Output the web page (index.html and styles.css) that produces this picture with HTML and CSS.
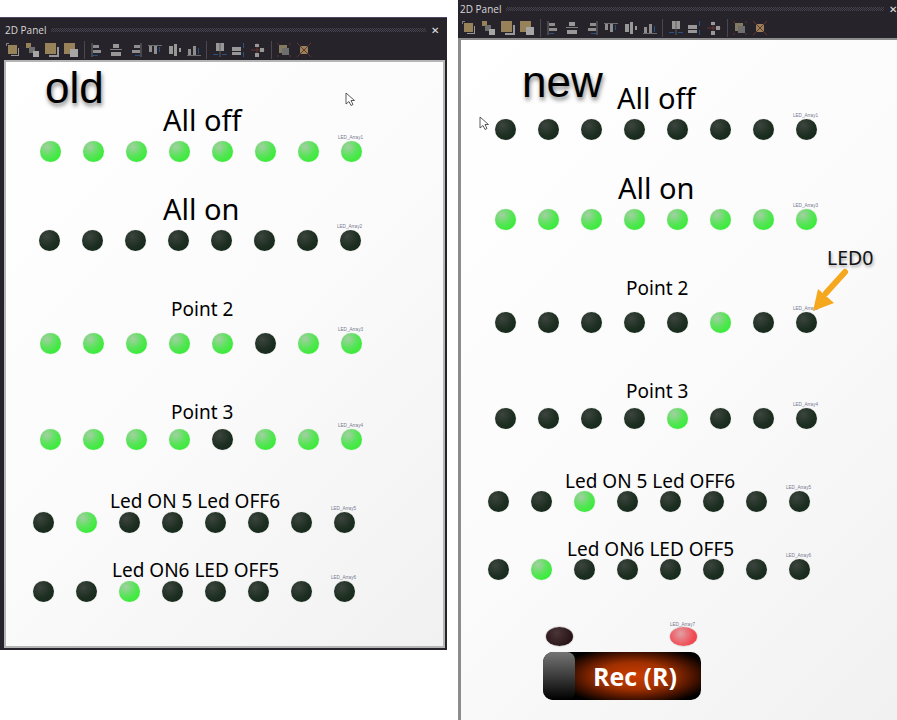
FILE: index.html
```html
<!DOCTYPE html>
<html lang="en">
<head>
    <meta charset="UTF-8">
    <meta name="viewport" content="width=device-width, initial-scale=1.0">
    <title>2D Panel old and new</title>
    <link rel="stylesheet" href="styles.css">
</head>
<body>
  <!-- Toolbar icon shapes, used by both panels -->
  <svg class="sprite" width="0" height="0" aria-hidden="true">
    <symbol id="i1" viewBox="0 0 16 16"><path d="M1 1h3v1H2v2H1z" fill="#8b8b8b"/><rect x="3" y="3" width="9" height="9" fill="#a48d5f"/><path d="M13 6h1v8H6v-1h7z" fill="#a5a5a5"/></symbol>
    <symbol id="i2" viewBox="0 0 16 16"><rect x="2" y="1" width="5" height="5" fill="#a48d5f"/><rect x="5" y="5" width="6" height="6" fill="#777"/><rect x="9" y="9" width="6" height="6" fill="#b5b5b5"/></symbol>
    <symbol id="i3" viewBox="0 0 16 16"><rect x="1" y="1" width="11" height="11" fill="#a48d5f"/><path d="M13 5h2v10H5v-2h8z" fill="#a5a5a5"/></symbol>
    <symbol id="i4" viewBox="0 0 16 16"><rect x="1" y="1" width="11" height="11" fill="#a48d5f"/><rect x="7" y="7" width="8" height="8" fill="#b5b5b5"/></symbol>
    <symbol id="a1" viewBox="0 0 16 16"><path d="M3 1v14" stroke="#777"/><rect x="4" y="3" width="6" height="3" fill="#9a9a9a"/><rect x="4" y="8" width="8" height="3" fill="#9a9a9a"/><path d="M4 13h5v1H4z" fill="#27598f"/></symbol>
    <symbol id="a2" viewBox="0 0 16 16"><rect x="5" y="2" width="6" height="4" fill="#a5a5a5"/><rect x="2" y="7" width="12" height="1" fill="#888"/><rect x="3" y="10" width="10" height="4" fill="#a5a5a5"/></symbol>
    <symbol id="a3" viewBox="0 0 16 16"><path d="M13 1v14" stroke="#777"/><rect x="6" y="3" width="6" height="3" fill="#9a9a9a"/><rect x="4" y="8" width="8" height="3" fill="#9a9a9a"/><path d="M7 13h5v1H7z" fill="#27598f"/></symbol>
    <symbol id="a4" viewBox="0 0 16 16"><path d="M1 3h14v1H1z" fill="#777"/><rect x="2" y="4" width="3" height="6" fill="#9a9a9a"/><rect x="7" y="4" width="3" height="8" fill="#9a9a9a"/><path d="M12 5h1v5h-1z" fill="#27598f"/></symbol>
    <symbol id="a5" viewBox="0 0 16 16"><rect x="2" y="4" width="4" height="8" fill="#a5a5a5"/><rect x="7" y="2" width="3" height="12" fill="#a5a5a5"/><rect x="12" y="6" width="2" height="4" fill="#a5a5a5"/></symbol>
    <symbol id="a6" viewBox="0 0 16 16"><path d="M1 13h14v1H1z" fill="#777"/><rect x="2" y="7" width="3" height="6" fill="#9a9a9a"/><rect x="7" y="4" width="3" height="9" fill="#9a9a9a"/><path d="M12 6h1v6h-1z" fill="#27598f"/></symbol>
    <symbol id="d1" viewBox="0 0 16 16"><rect x="4" y="1" width="8" height="8" fill="#a5a5a5"/><path d="M1 12.500h5M10 12.500h5" stroke="#27598f"/><path d="M8 1v14" stroke="#666"/></symbol>
    <symbol id="d2" viewBox="0 0 16 16"><rect x="1" y="5" width="9" height="4" fill="#a5a5a5"/><rect x="1" y="10" width="9" height="3" fill="#a5a5a5"/><path d="M12.500 1v5M12.500 10v5" stroke="#27598f"/></symbol>
    <symbol id="d3" viewBox="0 0 16 16"><path d="M1 8h14M7 1v14" stroke="#70352f"/><rect x="5" y="2" width="4" height="3" fill="#a5a5a5"/><rect x="5" y="11" width="4" height="4" fill="#a5a5a5"/><rect x="10" y="6" width="4" height="4" fill="#a5a5a5"/></symbol>
    <symbol id="g1" viewBox="0 0 16 16"><rect x="3" y="3" width="8" height="8" fill="#8f8468"/><rect x="6" y="6" width="7" height="7" fill="#777"/><path d="M1 2h2M13 2h2M1 14h2M13 14h2" stroke="#70352f"/></symbol>
    <symbol id="g2" viewBox="0 0 16 16"><rect x="4" y="4" width="8" height="8" fill="#a48d5f"/><path d="M1 1l14 14M15 1L1 15" stroke="#70352f"/></symbol>
  </svg>

  <!-- Old panel -->
  <section class="window window-old">
    <header class="titlebar">
      <span class="title">2D Panel</span>
      <span class="grip"></span>
      <span class="close">✕</span>
    </header>
    <div class="toolbar">
      <svg class="tool"><use href="#i1"/></svg><svg class="tool"><use href="#i2"/></svg><svg class="tool"><use href="#i3"/></svg><svg class="tool"><use href="#i4"/></svg>
      <span class="sep"></span>
      <svg class="tool"><use href="#a1"/></svg><svg class="tool"><use href="#a2"/></svg><svg class="tool"><use href="#a3"/></svg><svg class="tool"><use href="#a4"/></svg><svg class="tool"><use href="#a5"/></svg><svg class="tool"><use href="#a6"/></svg>
      <span class="sep"></span>
      <svg class="tool"><use href="#d1"/></svg><svg class="tool"><use href="#d2"/></svg><svg class="tool"><use href="#d3"/></svg>
      <span class="sep"></span>
      <svg class="tool"><use href="#g1"/></svg><svg class="tool"><use href="#g2"/></svg>
    </div>
    <div class="canvas">
      <div class="note old-note">old</div>
      <svg class="cursor old-cursor" viewBox="0 0 10 15"><path d="M1 1v11l3-2.500 2 4 2-1-2-4h3.500z" fill="#fff" stroke="#333" stroke-width="0.800"/></svg>

      <div class="heading big old-t1">All off</div>
      <div class="leds old-r1">
        <span class="led on"></span><span class="led on"></span><span class="led on"></span><span class="led on"></span><span class="led on"></span><span class="led on"></span><span class="led on"></span>
        <span class="led on"><span class="tag">LED_Array1</span></span>
      </div>

      <div class="heading big old-t2">All on</div>
      <div class="leds old-r2">
        <span class="led"></span><span class="led"></span><span class="led"></span><span class="led"></span><span class="led"></span><span class="led"></span><span class="led"></span>
        <span class="led"><span class="tag">LED_Array2</span></span>
      </div>

      <div class="heading old-t3">Point 2</div>
      <div class="leds old-r3">
        <span class="led on"></span><span class="led on"></span><span class="led on"></span><span class="led on"></span><span class="led on"></span><span class="led"></span><span class="led on"></span>
        <span class="led on"><span class="tag">LED_Array3</span></span>
      </div>

      <div class="heading old-t4">Point 3</div>
      <div class="leds old-r4">
        <span class="led on"></span><span class="led on"></span><span class="led on"></span><span class="led on"></span><span class="led"></span><span class="led on"></span><span class="led on"></span>
        <span class="led on"><span class="tag">LED_Array4</span></span>
      </div>

      <div class="heading old-t5">Led ON 5 Led OFF6</div>
      <div class="leds old-r5">
        <span class="led"></span><span class="led on"></span><span class="led"></span><span class="led"></span><span class="led"></span><span class="led"></span><span class="led"></span>
        <span class="led"><span class="tag">LED_Array5</span></span>
      </div>

      <div class="heading old-t6">Led ON6 LED OFF5</div>
      <div class="leds old-r6">
        <span class="led"></span><span class="led"></span><span class="led on"></span><span class="led"></span><span class="led"></span><span class="led"></span><span class="led"></span>
        <span class="led"><span class="tag">LED_Array6</span></span>
      </div>
    </div>
  </section>

  <!-- New panel -->
  <section class="window window-new">
    <header class="titlebar">
      <span class="title">2D Panel</span>
      <span class="grip"></span>
      <span class="close">✕</span>
    </header>
    <div class="toolbar">
      <svg class="tool"><use href="#i1"/></svg><svg class="tool"><use href="#i2"/></svg><svg class="tool"><use href="#i3"/></svg><svg class="tool"><use href="#i4"/></svg>
      <span class="sep"></span>
      <svg class="tool"><use href="#a1"/></svg><svg class="tool"><use href="#a2"/></svg><svg class="tool"><use href="#a3"/></svg><svg class="tool"><use href="#a4"/></svg><svg class="tool"><use href="#a5"/></svg><svg class="tool"><use href="#a6"/></svg>
      <span class="sep"></span>
      <svg class="tool"><use href="#d1"/></svg><svg class="tool"><use href="#d2"/></svg><svg class="tool"><use href="#d3"/></svg>
      <span class="sep"></span>
      <svg class="tool"><use href="#g1"/></svg><svg class="tool"><use href="#g2"/></svg>
    </div>
    <div class="canvas">
      <div class="note new-note">new</div>
      <svg class="cursor new-cursor" viewBox="0 0 10 15"><path d="M1 1v11l3-2.500 2 4 2-1-2-4h3.500z" fill="#fff" stroke="#333" stroke-width="0.800"/></svg>

      <div class="heading big new-t1">All off</div>
      <div class="leds new-r1">
        <span class="led"></span><span class="led"></span><span class="led"></span><span class="led"></span><span class="led"></span><span class="led"></span><span class="led"></span>
        <span class="led"><span class="tag">LED_Array1</span></span>
      </div>

      <div class="heading big new-t2">All on</div>
      <div class="leds new-r2">
        <span class="led on"></span><span class="led on"></span><span class="led on"></span><span class="led on"></span><span class="led on"></span><span class="led on"></span><span class="led on"></span>
        <span class="led on"><span class="tag">LED_Array3</span></span>
      </div>

      <div class="heading new-t3">Point 2</div>
      <div class="leds new-r3">
        <span class="led"></span><span class="led"></span><span class="led"></span><span class="led"></span><span class="led"></span><span class="led on"></span><span class="led"></span>
        <span class="led"><span class="tag">LED_Array2</span></span>
      </div>

      <div class="callout">LED0</div>
      <svg class="arrow" viewBox="0 0 40 44"><path d="M33 4L14 25" stroke="#f5a81e" stroke-width="6" stroke-linecap="round"/><path d="M1 43l5-22 16 14z" fill="#f5a81e"/></svg>

      <div class="heading new-t4">Point 3</div>
      <div class="leds new-r4">
        <span class="led"></span><span class="led"></span><span class="led"></span><span class="led"></span><span class="led on"></span><span class="led"></span><span class="led"></span>
        <span class="led"><span class="tag">LED_Array4</span></span>
      </div>

      <div class="heading new-t5">Led ON 5 Led OFF6</div>
      <div class="leds new-r5">
        <span class="led"></span><span class="led"></span><span class="led on"></span><span class="led"></span><span class="led"></span><span class="led"></span><span class="led"></span>
        <span class="led"><span class="tag">LED_Array5</span></span>
      </div>

      <div class="heading new-t6">Led ON6 LED OFF5</div>
      <div class="leds new-r6">
        <span class="led"></span><span class="led on"></span><span class="led"></span><span class="led"></span><span class="led"></span><span class="led"></span><span class="led"></span>
        <span class="led"><span class="tag">LED_Array6</span></span>
      </div>

      <span class="lamp lamp-off"></span>
      <span class="lamp lamp-on"><span class="tag">LED_Array7</span></span>
      <div class="rec">
        <span class="rec-knob"></span>
        <span class="rec-text">Rec (R)</span>
      </div>
    </div>
  </section>
</body>
</html>
```

FILE: styles.css
```css
/* Global Styles */
body {
    margin: 0;
    width: 897px;
    height: 720px;
    overflow: hidden;
    background: #fff;
    display: flex;
    align-items: flex-start;
    gap: 11px;
    font-family: "Noto Sans", "Open Sans", sans-serif;
}

.sprite {
    position: absolute;
}

/* Windows */
.window {
    box-sizing: border-box;
    display: flex;
    flex-direction: column;
    background: #27232a;
}

.window-old {
    width: 447px;
    height: 633px;
    margin-top: 17px;
    padding: 0 2px 2px 4px;
    border-top: 1px solid #4d4763;
}

.window-new {
    width: 439px;
    height: 720px;
}

.titlebar {
    box-sizing: border-box;
    display: flex;
    align-items: center;
    gap: 5px;
    height: 22px;
    flex: none;
    color: #d8d8d8;
    font-size: 10px;
}

.window-old .titlebar {
    padding: 2px 6px 0 1px;
}

.window-new .titlebar {
    height: 18px;
    padding-left: 2px;
}

.title {
    font-family: "Open Sans", sans-serif;
    white-space: nowrap;
}

.grip {
    flex: 1;
    height: 4px;
    background-image: repeating-conic-gradient(#46424e 0 25%, transparent 0 50%);
    background-size: 2px 2px;
}

.close {
    font-size: 10px;
    color: #e4e4e4;
}

/* Toolbar */
.toolbar {
    display: flex;
    align-items: center;
    height: 20px;
    flex: none;
    gap: 3.4px;
    padding-left: 1px;
}

.window-new .toolbar {
    padding-left: 3px;
}

.tool {
    width: 16px;
    height: 16px;
    flex: none;
    opacity: 0.9;
}

.sep {
    width: 1px;
    height: 18px;
    margin: 0 1px;
    background: #4b4750;
}

/* Canvas */
.canvas {
    position: relative;
    box-sizing: border-box;
    flex: 1;
    background: linear-gradient(135deg, #fff 0%, #fbfbfb 50%, #f1f1f1 100%);
    border: 2px solid #b5b5b5;
}

.window-new .canvas {
    border-width: 2px 0 0 3px;
    border-color: #8c8c8c;
}

.note {
    position: absolute;
    font-family: "Liberation Sans", sans-serif;
    font-size: 44px;
    line-height: 50px;
    color: #000;
    text-shadow: 1px 3px 4px rgba(0, 0, 0, 0.5);
}

.heading {
    position: absolute;
    font-size: 19px;
    line-height: 26px;
    color: #000;
    white-space: nowrap;
    font-family: "Noto Sans", sans-serif;
}

.big {
    font-size: 29px;
    line-height: 36px;
}

.cursor {
    position: absolute;
    width: 10px;
    height: 15px;
}

/* LEDs */
.leds {
    position: absolute;
    display: flex;
    gap: 22px;
}

.led {
    position: relative;
    flex: none;
    width: 21px;
    height: 21px;
    border-radius: 50%;
    background: radial-gradient(circle at 35% 30%, #3c443e 0%, #1c2e20 55%, #10261a 100%);
    box-shadow: 0 0 1px #a8b0a8;
}

.led.on {
    background: radial-gradient(circle at 33% 28%, #a4cfa4 0%, #58e458 45%, #1ff41f 100%);
    box-shadow: 0 0 1px #b4c4b4;
}

.tag {
    position: absolute;
    left: -3px;
    bottom: 21px;
    font-family: "Liberation Sans", sans-serif;
    font-size: 4.6px;
    line-height: 7px;
    color: #777a90;
    white-space: nowrap;
}

/* Old panel positions */
.old-note { left: 39px; top: 1px; }
.old-cursor { left: 339px; top: 30px; }
.old-t1 { left: 157px; top: 40px; }
.old-t2 { left: 157px; top: 129px; }
.old-t3 { left: 165px; top: 234px; }
.old-t4 { left: 165px; top: 337px; }
.old-t5 { left: 104px; top: 426px; }
.old-t6 { left: 106px; top: 495px; }
.old-r1 { left: 34px; top: 79px; }
.old-r2 { left: 33px; top: 168px; }
.old-r3 { left: 34px; top: 271px; }
.old-r4 { left: 34px; top: 367px; }
.old-r5 { left: 27px; top: 450px; }
.old-r6 { left: 27px; top: 519px; }

/* New panel positions */
.new-note { left: 61px; top: 17px; }
.new-cursor { left: 18px; top: 76px; }
.new-t1 { left: 156px; top: 40px; }
.new-t2 { left: 157px; top: 130px; }
.new-t3 { left: 165px; top: 235px; }
.new-t4 { left: 165px; top: 338px; }
.new-t5 { left: 104px; top: 428px; }
.new-t6 { left: 106px; top: 496px; }
.new-r1 { left: 34px; top: 79px; }
.new-r2 { left: 34px; top: 169px; }
.new-r3 { left: 34px; top: 272px; }
.new-r4 { left: 34px; top: 368px; }
.new-r5 { left: 27px; top: 451px; }
.new-r6 { left: 27px; top: 519px; }

.callout {
    position: absolute;
    left: 366px;
    top: 204px;
    font-size: 19.5px;
    line-height: 28px;
    color: #111;
    text-shadow: 1px 2px 3px rgba(0, 0, 0, 0.35);
}

.arrow {
    position: absolute;
    left: 351px;
    top: 228px;
    width: 40px;
    height: 44px;
}

/* Record control */
.lamp {
    position: absolute;
    top: 587px;
    width: 27px;
    height: 19px;
    border-radius: 50%;
}

.lamp-off {
    left: 85px;
    background: radial-gradient(circle at 40% 30%, #4a3638, #2a1518 70%, #220f12);
    box-shadow: 0 0 1px 0.5px #bbb;
}

.lamp-on {
    left: 209px;
    background: radial-gradient(circle at 40% 35%, #e0a0a4, #f05058 60%, #f83038);
    box-shadow: 0 0 1px 0.5px #ccc;
}

.lamp .tag {
    left: 0;
    bottom: 18px;
}

.rec {
    position: absolute;
    left: 82px;
    top: 612px;
    width: 158px;
    height: 48px;
    display: flex;
    align-items: center;
    border-radius: 10px;
    background: radial-gradient(ellipse 50% 62% at 58% 50%, #cc3e00 0%, #a03000 45%, #4c1400 75%, #000 100%);
    overflow: hidden;
}

.rec-knob {
    flex: none;
    width: 32px;
    height: 100%;
    border-radius: 8px;
    background: linear-gradient(180deg, #757575 0%, #3c3c3c 50%, #000 100%);
}

.rec-text {
    margin-left: 18px;
    font-family: "Open Sans", sans-serif;
    font-size: 25px;
    font-weight: 700;
    color: #fff;
    white-space: nowrap;
}
```
